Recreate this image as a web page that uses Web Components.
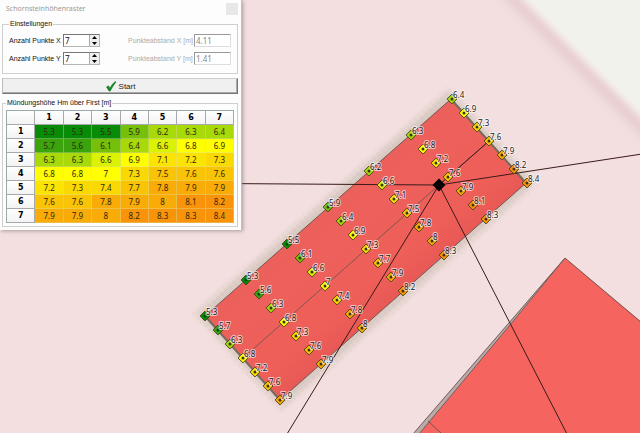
<!DOCTYPE html>
<html lang="de">
<head>
<meta charset="utf-8">
<title>Schornsteinhöhenraster</title>
<style>
html, body { margin: 0; height: 100%; overflow: hidden; }
body { font-family: "Liberation Sans", sans-serif; font-size: 7px; color: #111; }
</style>
</head>
<body>
<planning-app></planning-app>
<script>
const HEIGHTS = [
  [5.3, 5.3, 5.5, 5.9, 6.2, 6.3, 6.4],
  [5.7, 5.6, 6.1, 6.4, 6.6, 6.8, 6.9],
  [6.3, 6.3, 6.6, 6.9, 7.1, 7.2, 7.3],
  [6.8, 6.8, 7, 7.3, 7.5, 7.6, 7.6],
  [7.2, 7.3, 7.4, 7.7, 7.8, 7.9, 7.9],
  [7.6, 7.6, 7.8, 7.9, 8, 8.1, 8.2],
  [7.9, 7.9, 8, 8.2, 8.3, 8.3, 8.4]
];
const SCALE = [
  [5.5, '#088c08'], [5.7, '#3ba30c'], [6.1, '#76c00b'], [6.4, '#a8da0a'], [6.6, '#dcf205'],
  [7, '#ffff00'], [7.2, '#fbe403'], [7.4, '#fad903'], [7.7, '#f9c405'], [8, '#f9ab08'], [9, '#f9940a']
];
const colorOf = v => SCALE.find(([limit]) => v <= limit)[1];

class View extends HTMLElement {
  connectedCallback() {
    if (this.shadowRoot) return;
    this.attachShadow({ mode: 'open' }).innerHTML = this.render();
  }
}

class MapCanvas extends View {
  render() {
    // Raster nodes start at the west corner; one step along and one across the roof
    const points = [];
    HEIGHTS.forEach((row, j) => row.forEach((v, i) => {
      const x = Math.round(205 + i * 41.1 + j * 12.5), y = Math.round(316 - i * 36.2 + j * 14);
      points.push(`<g transform="translate(${x} ${y})"><path d="M0-4.900 4.900 0 0 4.900-4.900 0Z" fill="${colorOf(v)}" stroke="#3f4010" stroke-width=".9"/><circle r="1.5" fill="${v < 5.8 ? '#064006' : '#3c3210'}"/><text x="1" y="-1">${v}</text></g>`);
    }));
    return `<style>
      :host { display: block; }
      svg { display: block; width: 100%; height: 100%; }
      text { font: 8px "Noto Sans", sans-serif; fill: #242020; stroke: #fff; stroke-opacity: .65; stroke-width: 2px; stroke-linejoin: round; paint-order: stroke; }
      .edge { stroke: #735552; fill: none; }
      .ray { stroke: #3b1a1a; stroke-width: 1; fill: none; }
    </style>
    <svg viewBox="0 0 640 433" preserveAspectRatio="xMinYMin slice" role="img" aria-label="Lageplan">
      <defs>
        <filter id="soft" x="-20%" y="-20%" width="140%" height="140%"><feGaussianBlur stdDeviation="3"/></filter>
        <filter id="haze" x="-20%" y="-20%" width="140%" height="140%"><feGaussianBlur stdDeviation="4"/></filter>
        <pattern id="pixels" width="8" height="8" patternUnits="userSpaceOnUse"><path d="M0 0h4v4H0zM4 4h4v4H4z" fill="#b8aaa0" opacity=".07"/></pattern>
        <linearGradient id="roof" gradientUnits="userSpaceOnUse" x1="328" y1="207" x2="403" y2="292"><stop offset="0" stop-color="#ec605b"/><stop offset=".75" stop-color="#ef5f5a"/><stop offset="1" stop-color="#e85854"/></linearGradient>
      </defs>
      <rect width="640" height="433" fill="#f3dfdf"/>
      <path d="M504-10 660 146" stroke="#e2c5c8" stroke-width="13" opacity=".65" filter="url(#haze)"/>
      <path d="M505-20H680V155Z" fill="#f2f2ed" filter="url(#soft)"/>
      <path d="M203 314 449 97 528 183 282 402Z" fill="#c9beb2" stroke="#c9beb2" stroke-width="9" opacity=".65" filter="url(#soft)"/>
      <path d="M203 314 449 97 528 183 282 402Z" fill="none" stroke="url(#pixels)" stroke-width="18"/>
      <path class="edge" d="M205 316 451 99 526 183 280 400Z" style="fill:url(#roof)"/>
      <path class="edge" d="M243 358 489 141" stroke-width=".9"/>
      <path d="M205 316 280 400" stroke="#756b5c" stroke-width="2"/>
      <path d="M451 99 526 183" stroke="#756b5c" stroke-width="2"/>
      <path d="M565 258 410 438 650 438V329Z" fill="#f5645f"/>
      <path d="M565 258 642 323" class="edge"/>
      <path d="M565 258 413 434H419L510 325Z" fill="#bbaaa7" stroke="#70605e" stroke-width="1"/>
      <path class="edge" d="M428 421 441 433"/>
      <path class="ray" d="M439 185 0 182M439 185 642 154M439 185 287 434M439 185 567 434M439 185 489 141"/>
      ${points.join('')}
      <path d="M439 178.500 445.500 185 439 191.500 432.500 185Z" fill="#080303"/>
    </svg>`;
  }
}

class GroupBox extends View {
  render() {
    return `<style>
      :host { display: block; }
      fieldset { margin: 0; min-width: 0; border: 1px solid #cfcfcf; padding: var(--box-padding, 4px); }
      legend { padding: 0 1px; line-height: 10px; }
    </style><fieldset><legend>${this.getAttribute('label')}</legend><slot></slot></fieldset>`;
  }
}

class SpinField extends View {
  render() {
    return `<style>
      :host { display: grid; grid-template-columns: 54px 37px; align-items: center; white-space: nowrap; }
      .box { display: flex; height: 13px; border: 1px solid #b5b5b5; border-top-color: #777; border-left-color: #777; background: #fff; box-sizing: border-box; }
      input { flex: 1; min-width: 0; border: 0; padding: 0 1px; margin: 0; font: 8px "Noto Sans", sans-serif; color: inherit; background: none; line-height: 10px; appearance: textfield; outline: 0; }
      input::-webkit-inner-spin-button { appearance: none; margin: 0; }
      .arrows { display: flex; flex-direction: column; width: 9px; border-left: 1px solid #aaa; }
      button { flex: 1; padding: 0; margin: 0; border: 0; background: #eee; display: flex; align-items: center; justify-content: center; min-height: 0; }
      svg { width: 5px; height: 3px; display: block; }
    </style>
    <label for="n">${this.getAttribute('label')}</label>
    <div class="box"><input id="n" type="number" min="1" value="${this.getAttribute('value')}">
      <div class="arrows"><button type="button" aria-label="Mehr"><svg viewBox="0 0 5 3"><path d="M0 3 2.500 0 5 3Z"/></svg></button><button type="button" aria-label="Weniger"><svg viewBox="0 0 5 3"><path d="M0 0 2.500 3 5 0Z"/></svg></button></div>
    </div>`;
  }
  connectedCallback() {
    super.connectedCallback();
    const input = this.shadowRoot.querySelector('input');
    const [up, down] = this.shadowRoot.querySelectorAll('button');
    up.onclick = () => input.stepUp();
    down.onclick = () => input.stepDown();
  }
}

class ReadField extends View {
  render() {
    return `<style>
      :host { display: grid; grid-template-columns: 66px 37px; align-items: center; color: #aaa; white-space: nowrap; }
      input { width: 100%; height: 13px; box-sizing: border-box; margin: 0; border: 1px solid #ddd; border-top-color: #999; border-left-color: #999; padding: 0 1px; background: #fff; color: #888; font: 8px "Noto Sans", sans-serif; }
    </style>
    <label for="d">${this.getAttribute('label')}</label><input id="d" type="text" disabled value="${this.getAttribute('value')}">`;
  }
}

class StartButton extends View {
  render() {
    return `<style>
      :host { display: block; }
      button { display: flex; align-items: center; justify-content: center; gap: 2px; width: 100%; height: 16px; padding: 0; font: inherit; font-size: 8px; color: #222; background: #f0f0f0; border: 1px solid; border-color: #ccc #777 #777 #bbb; box-shadow: inset -1px -1px #aaa; }
      svg { width: 12px; height: 12px; }
    </style><button type="button"><svg viewBox="0 0 12 12" aria-hidden="true"><path d="M1.500 7 3.500 5.800 5 8.300C6.300 5.500 8 3 10.500 1.500L11 2C9 4.500 7 7.500 5.300 11H4Z" fill="#158a28" stroke="#0b6a1a" stroke-width=".5"/></svg><slot></slot></button>`;
  }
}

class HeightTable extends View {
  render() {
    const head = HEIGHTS[0].map((_, i) => `<th scope="col">${i + 1}</th>`).join('');
    const body = HEIGHTS.map((row, j) => `<tr><th scope="row">${j + 1}</th>${row.map(v => `<td style="background:${colorOf(v)}">${v}</td>`).join('')}</tr>`).join('');
    return `<style>
      :host { display: block; }
      table { width: 100%; border-collapse: separate; border-spacing: 0; table-layout: fixed; border-top: 1px solid #9aa; border-left: 1px solid #9aa; box-sizing: border-box; }
      th, td { height: 13px; line-height: 12px; padding: 0; text-align: center; border-right: 1px solid #a9a9ad; border-bottom: 1px solid #a9a9ad; }
      th { background: linear-gradient(#fff, #f3f3f4); font: bold 8px/13px "DejaVu Sans", sans-serif; color: #000; }
      td { font: 8px/12px "Noto Sans", sans-serif; border-color: #dcdca066; color: #302808; }
    </style><table><thead><tr><th></th>${head}</tr></thead><tbody>${body}</tbody></table>`;
  }
}

class RasterDialog extends View {
  render() {
    return `<style>
      :host { display: block; background: #fdfdfd; box-sizing: border-box; padding: 2px 3px 3px 2px; border-right: 1px solid #c8bcbc; box-shadow: 1px 1px 4px #7a6a6a99; }
      header { display: flex; justify-content: space-between; align-items: center; height: 13px; margin-bottom: 4px; }
      h1 { margin: 0 0 0 4px; font: 7px "Noto Sans", sans-serif; color: #999; }
      .close { width: 12px; height: 12px; padding: 0; border: 0; background: #e7e7e7; }
      .settings { --box-padding: 5px 6px 8px 6px; }
      .fields { display: grid; grid-template-columns: auto auto; justify-content: space-between; row-gap: 5px; }
      start-button { margin: 4px 0; }
      .result { --box-padding: 2px 3px 3px 3px; }
    </style>
    <header><h1>Schornsteinhöhenraster</h1><button class="close" type="button" aria-label="Schließen"></button></header>
    <group-box class="settings" label="Einstellungen"><div class="fields">
      <spin-field label="Anzahl Punkte X" value="7"></spin-field><read-field label="Punkteabstand X [m]" value="4.11"></read-field>
      <spin-field label="Anzahl Punkte Y" value="7"></spin-field><read-field label="Punkteabstand Y [m]" value="1.41"></read-field>
    </div></group-box>
    <start-button>Start</start-button>
    <group-box class="result" label="Mündungshöhe Hm über First [m]"><height-table></height-table></group-box>`;
  }
}

class PlanningApp extends View {
  render() {
    return `<style>
      :host { display: grid; height: 100%; grid-template: minmax(0, 1fr) / minmax(0, 1fr); }
      map-canvas, raster-dialog { grid-area: 1 / 1; }
      map-canvas { min-height: 0; }
      raster-dialog { width: 242px; align-self: start; justify-self: start; z-index: 1; }
    </style><map-canvas></map-canvas><raster-dialog></raster-dialog>`;
  }
}

customElements.define('map-canvas', MapCanvas);
customElements.define('group-box', GroupBox);
customElements.define('spin-field', SpinField);
customElements.define('read-field', ReadField);
customElements.define('start-button', StartButton);
customElements.define('height-table', HeightTable);
customElements.define('raster-dialog', RasterDialog);
customElements.define('planning-app', PlanningApp);
</script>
</body>
</html>
